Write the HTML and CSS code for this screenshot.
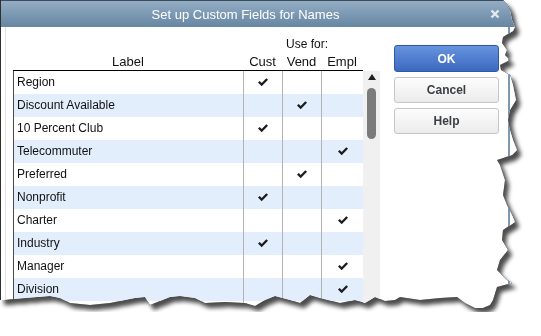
FILE: index.html
```html
<!DOCTYPE html>
<html lang="en">
  <head>
    <meta charset="UTF-8" />
    <title>Set up Custom Fields for Names</title>
    <link rel="stylesheet" href="styles.css">
  </head>
  <body>
    <div class="sheet">
      <div class="dialog">
        <div class="titlebar">
          <span class="title">Set up Custom Fields for Names</span>
          <svg class="close" width="10" height="10" viewBox="0 0 10 10">
            <path d="M1.5 1.5 L8.5 8.5 M8.5 1.5 L1.5 8.5" />
          </svg>
        </div>

        <div class="content">
          <div class="fields">
            <div class="usefor">Use for:</div>
            <div class="head">
              <span>Label</span>
              <span>Cust</span>
              <span>Vend</span>
              <span>Empl</span>
            </div>
            <div class="listbody">
              <div class="rows" id="rows"></div>
              <div class="scrollbar">
                <span class="arrow"></span>
                <span class="thumb"></span>
              </div>
            </div>
          </div>

          <div class="buttons">
            <button class="btn ok">OK</button>
            <button class="btn">Cancel</button>
            <button class="btn">Help</button>
          </div>
        </div>
      </div>
    </div>

    <script>
      // label, cust, vend, empl
      const fields = [
        ["Region", 1, 0, 0],
        ["Discount Available", 0, 1, 0],
        ["10 Percent Club", 1, 0, 0],
        ["Telecommuter", 0, 0, 1],
        ["Preferred", 0, 1, 0],
        ["Nonprofit", 1, 0, 0],
        ["Charter", 0, 0, 1],
        ["Industry", 1, 0, 0],
        ["Manager", 0, 0, 1],
        ["Division", 0, 0, 1],
        ["", 0, 0, 0],
      ];

      const check =
        '<svg width="10" height="9" viewBox="0 0 10 9"><path d="M0 4.6 L1.7 3 L3.7 5 L8.3 0.2 L10 1.8 L3.7 8.2 Z"/></svg>';

      const rows = document.getElementById("rows");
      fields.forEach((f) => {
        const row = document.createElement("div");
        row.className = "row";
        let html = `<span class="label">${f[0]}</span>`;
        for (let i = 1; i < 4; i++) {
          html += `<span class="mark">${f[i] ? check : ""}</span>`;
        }
        row.innerHTML = html;
        rows.appendChild(row);
      });
    </script>
  </body>
</html>
```

FILE: styles.css
```css
html,
body {
  margin: 0;
  padding: 0;
  background: #fff;
  overflow: hidden;
}

.sheet {
  width: fit-content;
  filter: drop-shadow(0 0 0.7px #000) drop-shadow(4px 5px 2px rgba(0, 0, 0, 0.7));
}

.dialog {
  width: 519px;
  height: 312px;
  background: #fff;
  border-left: 1px solid #2f2f2f;
  box-shadow: inset -10px 0 0 #fff, inset -12px 0 0 #7d97b0;
  font-family: "Liberation Sans", Arial, sans-serif;
  display: flex;
  flex-direction: column;
  clip-path: polygon(
    0 0, 503px 0, 507px 4px, 510px 10px, 512px 20px, 515px 27px, 513px 31px,
    503px 37px, 502px 43px, 507px 50px, 505px 55px, 510px 60px, 500px 65px,
    501px 70px, 510px 75px, 513px 85px, 516px 100px, 510px 110px, 508px 120px,
    510px 130px, 513px 140px, 517px 150px, 512px 155px, 497px 160px,
    500px 165px, 505px 180px, 503px 195px, 507px 205px, 512px 215px,
    515px 222px, 503px 230px, 502px 240px, 508px 250px, 500px 260px,
    497px 270px, 507px 280px, 512px 283px, 497px 287px, 493px 300px,
    490px 305px, 483px 308px, 475px 308px, 465px 303px, 457px 297px,
    440px 298px, 420px 300px, 400px 297px, 395px 300px, 385px 301px,
    375px 297px, 365px 303px, 355px 300px, 340px 303px, 320px 298px,
    310px 295px, 300px 303px, 290px 300px, 275px 296px, 265px 300px,
    255px 306px, 245px 303px, 225px 302px, 205px 303px, 195px 298px,
    180px 296px, 170px 297px, 150px 305px, 145px 297px, 135px 298px,
    110px 303px, 90px 305px, 70px 303px, 60px 298px, 50px 296px,
    13px 299px, 5px 300px, 0 300px
  );
}

.titlebar {
  height: 26px;
  border-top: 1px solid #3d4d5c;
  background: linear-gradient(#93adc4, #6686a2);
  display: flex;
  align-items: center;
  flex-shrink: 0;
}

.title {
  flex: 1;
  text-align: center;
  color: #fff;
  font-size: 13px;
  line-height: 26px;
  padding-top: 1px;
}

.close {
  margin-right: 20px;
  margin-top: -1px;
}

.close path {
  stroke: #e3e9ee;
  stroke-width: 2.4;
  fill: none;
}

.content {
  flex: 1;
  display: flex;
  gap: 14px;
  margin-left: 4px;
  padding: 10px 0 0 7px;
  border-left: 1px solid #e2e2e2;
  min-height: 0;
}

.fields {
  width: 367px;
  display: flex;
  flex-direction: column;
}

.usefor {
  font-size: 12px;
  line-height: 14px;
  padding-left: 273px;
  color: #111;
}

.head {
  display: grid;
  grid-template-columns: 230px 39px 39px 42px;
  width: 350px;
  padding-top: 3px;
  font-size: 13px;
  line-height: 16px;
  text-align: center;
  color: #111;
  border-bottom: 1px solid #000;
}

.listbody {
  display: flex;
  flex: 1;
  min-height: 0;
}

.rows {
  width: 349px;
  border-left: 1px solid #4a4a4a;
}

.row {
  display: grid;
  grid-template-columns: 229px 39px 39px 42px;
  height: 23px;
}

.row:nth-child(even) {
  background: #e2eefc;
}

.label {
  font-size: 12px;
  line-height: 23px;
  padding-left: 3px;
  color: #111;
  white-space: nowrap;
}

.mark {
  border-left: 1px solid #b3b3b3;
  display: flex;
  align-items: center;
  justify-content: center;
}

.mark path {
  fill: #1c1c1c;
}

.scrollbar {
  width: 17px;
  background: #f0f0f0;
  display: flex;
  flex-direction: column;
  align-items: center;
}

.arrow {
  margin-top: 3px;
  width: 0;
  height: 0;
  border-left: 4.5px solid transparent;
  border-right: 4.5px solid transparent;
  border-bottom: 6px solid #1e1e1e;
}

.thumb {
  margin-top: 8px;
  width: 9px;
  height: 51px;
  border-radius: 5px;
  background: #7b7b7b;
}

.buttons {
  display: flex;
  flex-direction: column;
  gap: 5px;
  padding-top: 8px;
}

.btn {
  width: 105px;
  height: 26px;
  border: 1px solid #c6c6c6;
  border-radius: 3px;
  background: linear-gradient(#fdfdfd, #ebebeb);
  font-family: "Liberation Sans", Arial, sans-serif;
  font-size: 12px;
  font-weight: bold;
  color: #3b3f45;
  padding: 0;
}

.btn.ok {
  height: 27px;
  border-color: #2e58a6;
  background: linear-gradient(#6694dc, #3c69c1);
  color: #fff;
}
```
